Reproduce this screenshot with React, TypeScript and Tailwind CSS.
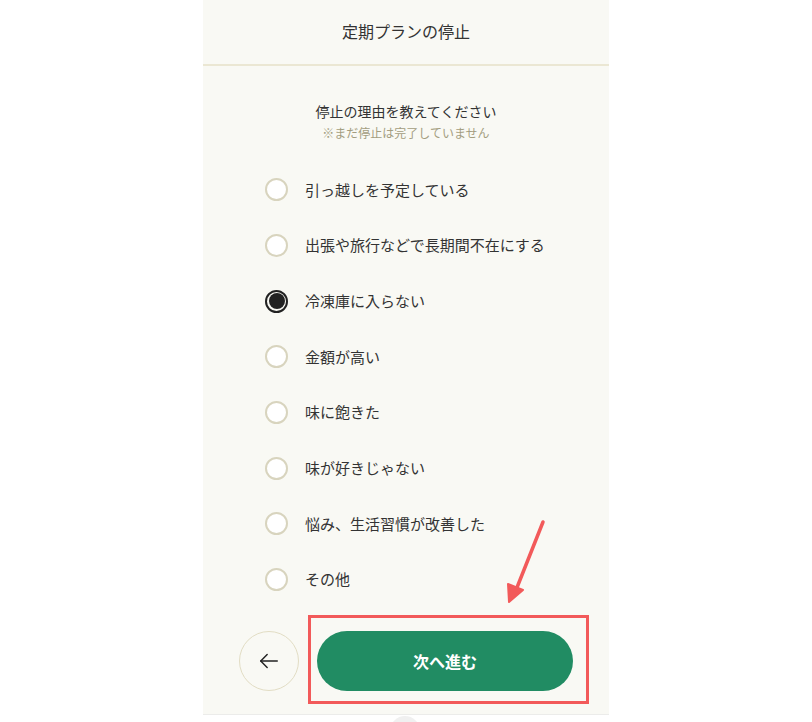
import { useState } from "react";

const reasons = [
  "引っ越しを予定している",
  "出張や旅行などで長期間不在にする",
  "冷凍庫に入らない",
  "金額が高い",
  "味に飽きた",
  "味が好きじゃない",
  "悩み、生活習慣が改善した",
  "その他",
];

export default function App() {
  const [selected, setSelected] = useState(2);

  return (
    <div
      className="relative w-[812px] h-[722px] bg-white overflow-hidden"
      style={{ fontFamily: '"Noto Sans CJK JP", "Noto Sans", sans-serif' }}
    >
      <div className="w-[406px] mx-auto bg-[#f9f9f4] border-b border-[#ececea]">
        {/* Header */}
        <div className="h-[66px] flex items-center justify-center border-b-2 border-[#ebe7d3]">
          <h1 className="text-[16px] text-[#333] mt-[-2px]">定期プランの停止</h1>
        </div>

        {/* Question */}
        <div className="pt-[34px] pb-[21px] text-center">
          <p className="text-[14px] leading-[22px] text-[#333]">停止の理由を教えてください</p>
          <p className="mt-[3px] text-[12px] leading-[16px] text-[#a39d80]">※まだ停止は完了していません</p>
        </div>

        {/* Options */}
        <div className="flex flex-col">
          {reasons.map((r, i) => (
            <button
              key={r}
              onClick={() => setSelected(i)}
              className="h-[55.7px] flex items-center gap-[17px] pl-[62px] text-left"
            >
              {selected === i ? (
                <span className="w-[23px] h-[23px] rounded-full border-2 border-[#222] bg-[#f9f9f4] flex items-center justify-center">
                  <span className="w-[16px] h-[16px] rounded-full bg-[#222]" />
                </span>
              ) : (
                <span className="w-[23px] h-[23px] rounded-full border-2 border-[#d8d4be] bg-white" />
              )}
              <span className="text-[15px] text-[#333]">{r}</span>
            </button>
          ))}
        </div>

        {/* Buttons */}
        <div className="mt-[23px] pb-[23px] px-9 flex items-center gap-[18px]">
          <button className="w-[60px] h-[60px] shrink-0 rounded-full border-[1.5px] border-[#e2ddc4] flex items-center justify-center">
            <svg width="22" height="22" viewBox="0 0 24 24" fill="none" stroke="#222" strokeWidth="1.6" strokeLinecap="round" strokeLinejoin="round">
              <path d="M21 12H3" />
              <path d="M10 5l-7 7 7 7" />
            </svg>
          </button>
          <button className="flex-1 h-[60px] rounded-full bg-[#218c63] text-white text-[16px] font-bold">
            次へ進む
          </button>
        </div>
      </div>

      {/* Bottom faint circle */}
      <div className="absolute left-[390px] top-[716px] w-[30px] h-[30px] rounded-full bg-[#f0f0f0]" />

      {/* Annotation */}
      <div className="absolute left-[308px] top-[615px] w-[281px] h-[89px] border-[3px] border-[#f25a5a]" />
      <svg className="absolute left-0 top-0" width="812" height="722" viewBox="0 0 812 722" fill="none">
        <path d="M543 522L516 590" stroke="#f25a5a" strokeWidth="3.5" strokeLinecap="round" />
        <path d="M509 602L508 584L523 590Z" fill="#f25a5a" stroke="#f25a5a" strokeWidth="2" strokeLinejoin="round" />
      </svg>
    </div>
  );
}
